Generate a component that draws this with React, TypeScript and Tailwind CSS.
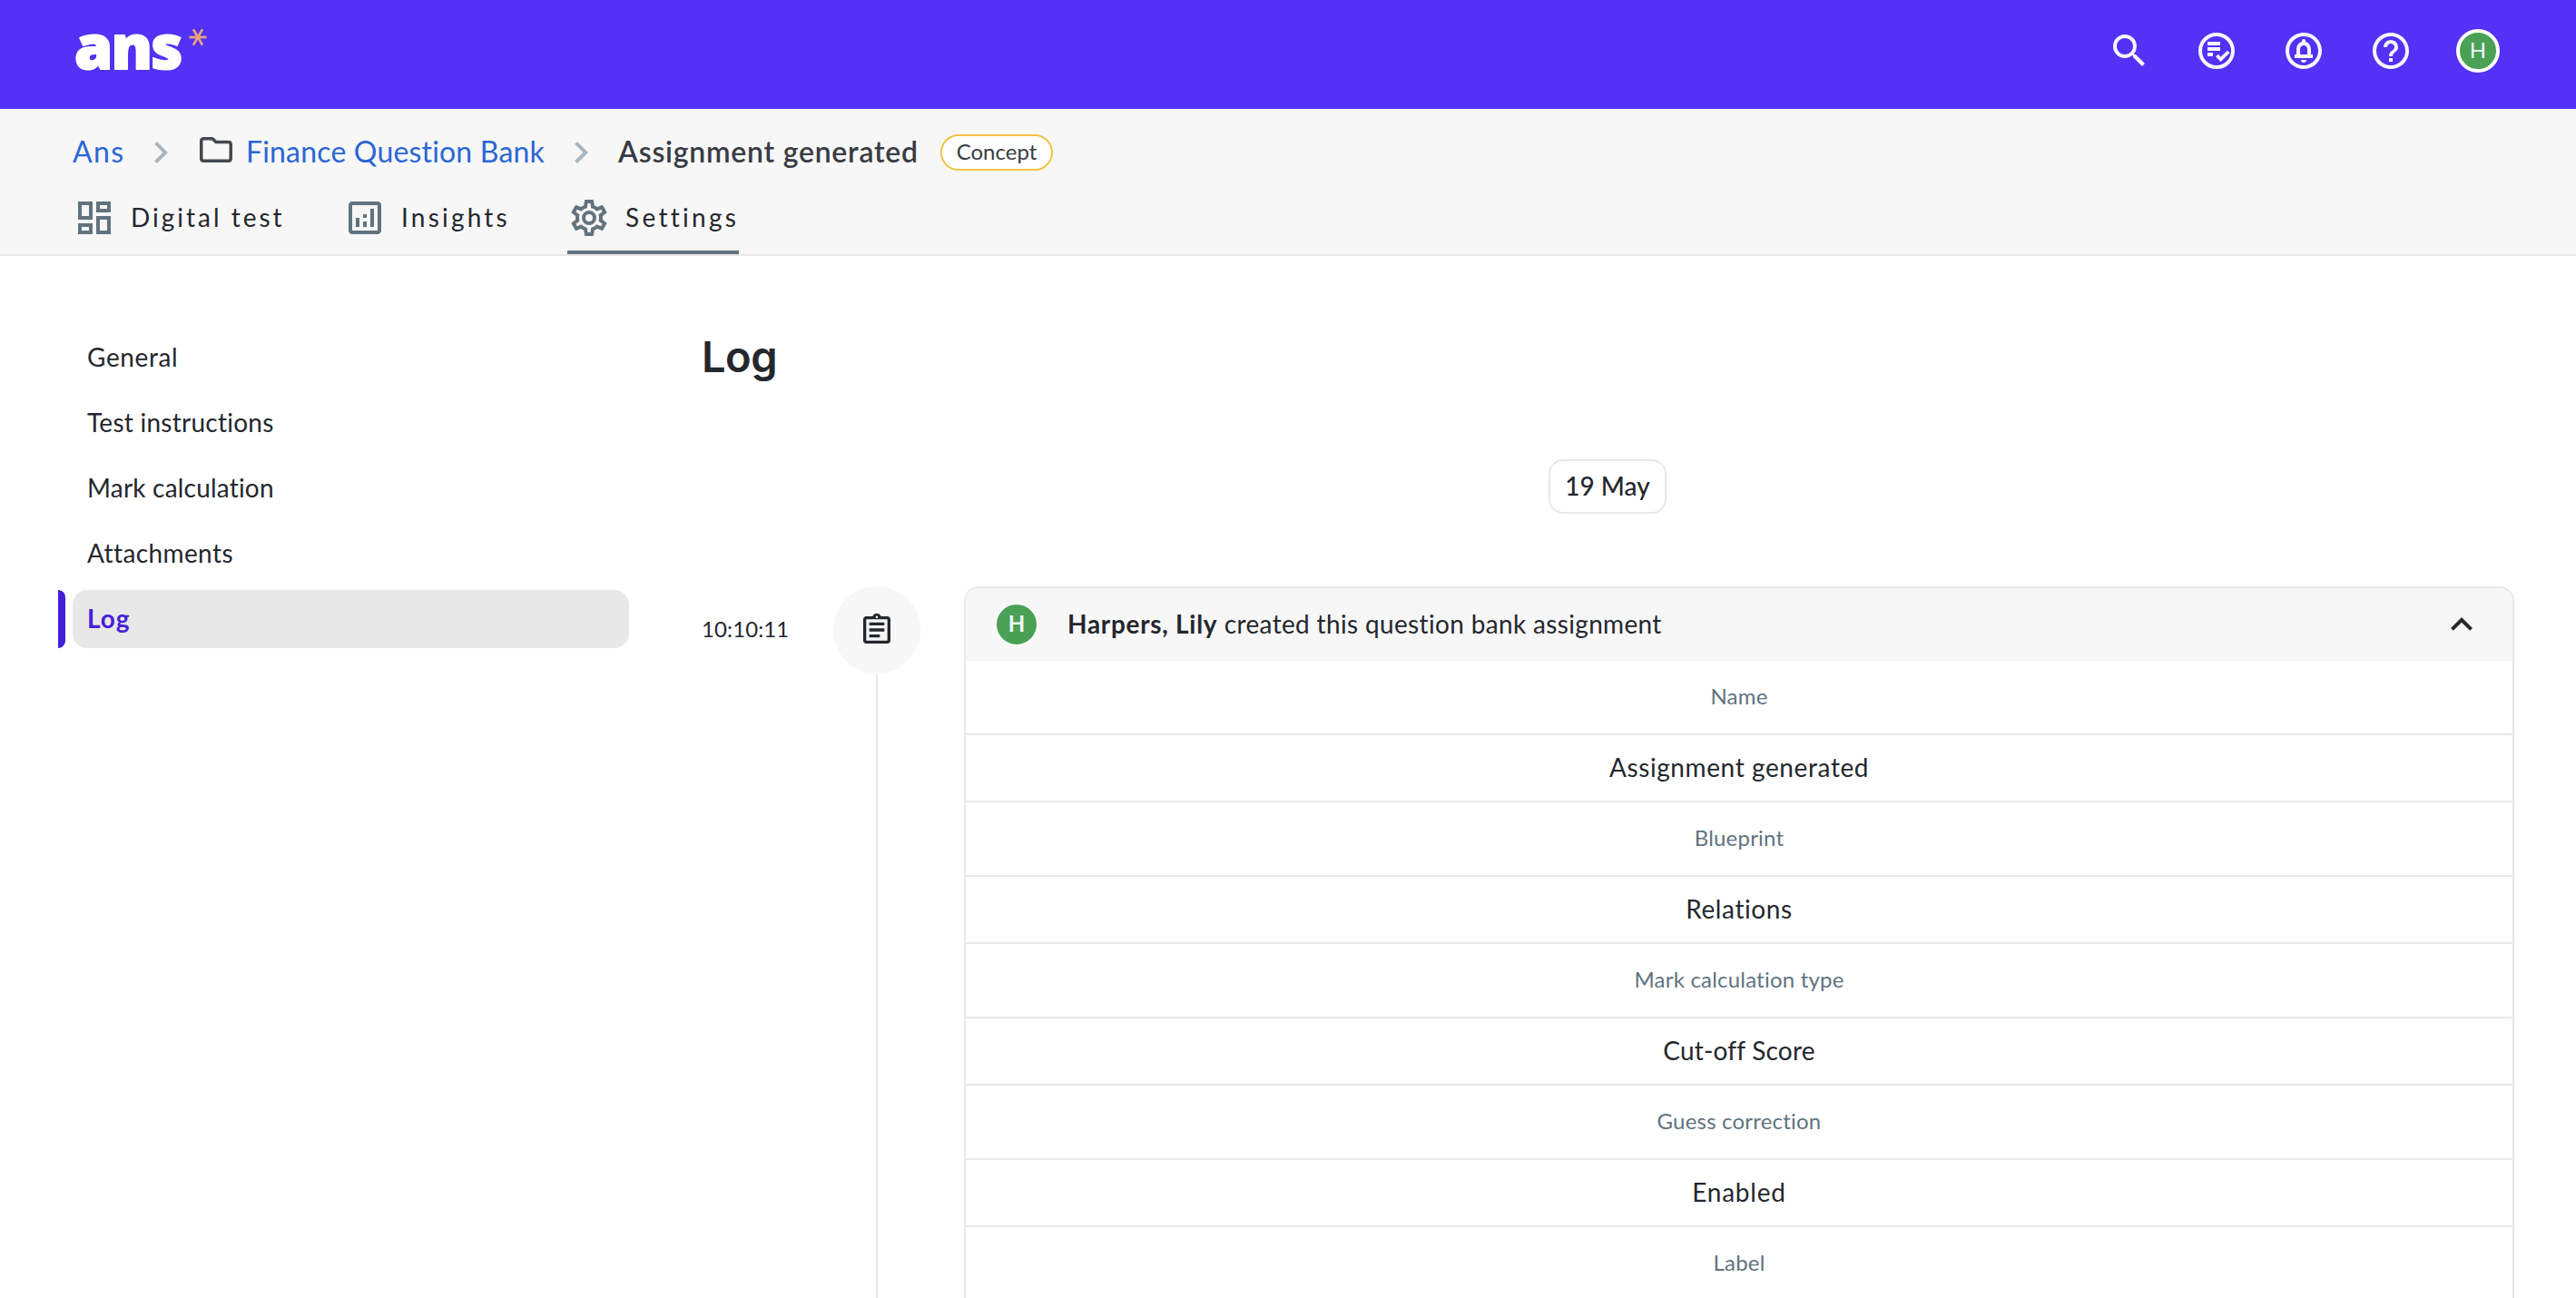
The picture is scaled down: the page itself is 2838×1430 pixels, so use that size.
import { ReactNode } from "react";
import {
  MdChevronRight,
  MdExpandLess,
  MdHelpOutline,
  MdOutlineAnalytics,
  MdOutlineAssignment,
  MdOutlineCircleNotifications,
  MdOutlineDashboard,
  MdSearch,
} from "react-icons/md";

const Logo = () => (
  <div className="flex h-[120px] items-start">
    <span className="mt-[3px] ml-0.5 w-[126px] font-['Open_Sans',sans-serif] text-[68px] leading-[94px] font-extrabold tracking-[-1.8px] text-white [-webkit-text-stroke:2px_white]">
      ans
    </span>
    <svg className="mt-[31px] h-5 w-5" viewBox="-10 -10 20 20">
      <g stroke="#e9a47e" strokeWidth="2.8">
        <path d="M-9.5 0H9.5" />
        <path d="M-5 -8.6L5 8.6" />
        <path d="M5 -8.6L-5 8.6" />
      </g>
    </svg>
  </div>
);

const GradingIcon = () => (
  <svg className="size-12" viewBox="0 0 24 24" fill="currentColor">
    <circle cx="12" cy="12" r="9" fill="none" stroke="currentColor" strokeWidth="2" />
    <path d="M7 7h7v2H7zM7 10h7v2H7zM7 13h3v2H7z" />
    <path
      d="M12.2 14.6l2.1 2.1 4.3-4.2"
      fill="none"
      stroke="currentColor"
      strokeWidth="1.9"
    />
  </svg>
);

const FolderIcon = () => (
  <svg className="h-7 w-9" viewBox="0 0 36 28">
    <path
      d="M4.5 1.75H14L18 5.5H31.5Q34.25 5.5 34.25 8.2V23.5Q34.25 26.25 31.5 26.25H4.5Q1.75 26.25 1.75 23.5V4.5Q1.75 1.75 4.5 1.75Z"
      fill="none"
      stroke="#414851"
      strokeWidth="3.5"
    />
  </svg>
);

const CogIcon = () => (
  <svg className="size-12" viewBox="0 0 24 24" fill="currentColor">
    <path d="M12,8A4,4 0 0,1 16,12A4,4 0 0,1 12,16A4,4 0 0,1 8,12A4,4 0 0,1 12,8M12,10A2,2 0 0,0 10,12A2,2 0 0,0 12,14A2,2 0 0,0 14,12A2,2 0 0,0 12,10M10,22C9.75,22 9.54,21.82 9.5,21.58L9.13,18.93C8.5,18.68 7.96,18.34 7.44,17.94L4.95,18.95C4.73,19.03 4.46,18.95 4.34,18.73L2.34,15.27C2.21,15.05 2.27,14.78 2.46,14.63L4.57,12.97L4.5,12L4.57,11L2.46,9.37C2.27,9.22 2.21,8.95 2.34,8.73L4.34,5.27C4.46,5.05 4.73,4.96 4.95,5.05L7.44,6.05C7.96,5.66 8.5,5.32 9.13,5.07L9.5,2.42C9.54,2.18 9.75,2 10,2H14C14.25,2 14.46,2.18 14.5,2.42L14.87,5.07C15.5,5.32 16.04,5.66 16.56,6.05L19.05,5.05C19.27,4.96 19.54,5.05 19.66,5.27L21.66,8.73C21.79,8.95 21.73,9.22 21.54,9.37L19.43,11L19.5,12L19.43,13L21.54,14.63C21.73,14.78 21.79,15.05 21.66,15.27L19.66,18.73C19.54,18.95 19.27,19.04 19.05,18.95L16.56,17.95C16.04,18.34 15.5,18.68 14.87,18.93L14.5,21.58C14.46,21.82 14.25,22 14,22H10M11.25,4L10.88,6.61C9.68,6.86 8.62,7.5 7.85,8.39L5.44,7.35L4.69,8.65L6.8,10.2C6.4,11.37 6.4,12.64 6.8,13.8L4.68,15.36L5.43,16.66L7.86,15.62C8.63,16.5 9.68,17.14 10.87,17.38L11.24,20H12.76L13.13,17.39C14.32,17.14 15.37,16.5 16.14,15.62L18.57,16.66L19.32,15.36L17.2,13.81C17.6,12.64 17.6,11.37 17.2,10.2L19.31,8.65L18.56,7.35L16.15,8.39C15.38,7.5 14.32,6.86 13.12,6.62L12.75,4H11.25Z" />
  </svg>
);

const Header = () => (
  <header className="flex h-[120px] justify-between bg-[#5331f5] pr-[84px] pl-[80px]">
    <Logo />
    <div className="flex h-[112px] items-center gap-12 text-[#f6f5fc]">
      <MdSearch className="size-12" />
      <GradingIcon />
      <MdOutlineCircleNotifications className="size-12" />
      <MdHelpOutline className="size-12" />
      <div className="flex size-12 items-center justify-center rounded-full border-4 border-white bg-[#4aa156] pb-0.5 text-[24px] leading-none">
        H
      </div>
    </div>
  </header>
);

const Breadcrumbs = () => (
  <div className="flex h-24 items-center text-[32px]">
    <a className="w-[73px] pb-[3px] tracking-[1.4px] text-[#2a66d5]">Ans</a>
    <MdChevronRight className="size-12 shrink-0 text-[#a9b5be]" />
    <a className="ml-[19px] flex w-[396px] items-center gap-[15px] text-[#2a66d5]">
      <span className="pb-1.5">
        <FolderIcon />
      </span>
      <span className="pb-[3px] tracking-[0.18px] whitespace-nowrap">
        Finance Question Bank
      </span>
    </a>
    <MdChevronRight className="size-12 shrink-0 text-[#a9b5be]" />
    <span className="ml-[17px] w-[355px] pb-[3px] font-semibold tracking-[0.74px] whitespace-nowrap text-[#373c43]">
      Assignment generated
    </span>
    <span className="flex h-10 w-[124px] items-center justify-center rounded-full border-2 border-[#f4c244] bg-white pb-0.5 text-[24px] text-[#373c43]">
      Concept
    </span>
  </div>
);

interface TabProps {
  icon: ReactNode;
  label: string;
  className: string;
  active?: boolean;
}
const Tab = ({ icon, label, className, active }: TabProps) => (
  <a
    className={`flex h-16 items-start gap-4 text-[28px] ${className} ${
      active ? "border-b-4 border-[#61737f]" : ""
    }`}
  >
    <span className="text-[#61737f]">{icon}</span>
    <span className="leading-[46px] whitespace-nowrap">{label}</span>
  </a>
);

const SubHeader = () => (
  <div className="h-[162px] border-b-2 border-[#e8e8e8] bg-[#f7f7f7] pl-[80px]">
    <Breadcrumbs />
    <nav className="flex">
      <Tab
        icon={<MdOutlineDashboard className="size-12" />}
        label="Digital test"
        className="w-[298px] tracking-[3px]"
      />
      <Tab
        icon={<MdOutlineAnalytics className="size-12" />}
        label="Insights"
        className="w-[247px] tracking-[3.2px]"
      />
      <Tab
        icon={<CogIcon />}
        label="Settings"
        className="w-[189px] tracking-[3.3px]"
        active
      />
    </nav>
  </div>
);

const menu = [
  { label: "General", className: "tracking-[0.6px]" },
  { label: "Test instructions", className: "tracking-[0.25px]" },
  { label: "Mark calculation", className: "tracking-[0.2px]" },
  { label: "Attachments", className: "tracking-[0.4px]" },
];

const Sidebar = () => (
  <aside className="flex w-[629px] flex-col gap-2 pt-20 text-[28px]">
    {menu.map((item) => (
      <a
        key={item.label}
        className={`ml-4 flex h-16 items-center px-4 pb-0.5 ${item.className}`}
      >
        {item.label}
      </a>
    ))}
    <div className="flex gap-2">
      <span className="h-16 w-2 rounded-r-lg bg-[#4520d9]" />
      <a className="flex h-16 flex-1 items-center rounded-2xl bg-[#e8e8e8] pb-0.5 pl-4 font-bold tracking-[1px] text-[#4520d9]">
        Log
      </a>
    </div>
  </aside>
);

const fields = [
  { name: "Name", value: "Assignment generated", className: "tracking-[0.6px]" },
  { name: "Blueprint", value: "Relations", className: "tracking-[0.6px]" },
  { name: "Mark calculation type", value: "Cut-off Score", className: "tracking-[0.2px]" },
  { name: "Guess correction", value: "Enabled", className: "tracking-[0.8px]" },
  { name: "Label", value: "", className: "" },
];

const LogCard = () => (
  <div className="h-[800px] w-[1708px] overflow-hidden rounded-t-2xl border-2 border-[#e8e8e8]">
    <div className="flex h-20 items-center bg-[#f7f7f7] px-8">
      <span className="flex size-12 items-center justify-center rounded-full border-2 border-white bg-[#4aa156] pb-0.5 text-[24px] leading-none font-bold text-[#f6f6f6]">
        H
      </span>
      <p className="ml-8 flex-1 pb-0.5 text-[28px] tracking-[0.34px]">
        <b className="tracking-[0.7px]">Harpers, Lily</b> created this question
        bank assignment
      </p>
      <MdExpandLess className="size-12" />
    </div>
    {fields.map((field) => (
      <div key={field.name}>
        <div className="flex h-[82px] items-center justify-center border-b-2 border-[#e8e8e8] pb-0.5 text-[24px] tracking-[0.2px] text-[#61737f]">
          {field.name}
        </div>
        <div
          className={`flex h-[74px] items-center justify-center border-b-2 border-[#e8e8e8] pb-0.5 text-[28px] ${field.className}`}
        >
          {field.value}
        </div>
      </div>
    ))}
  </div>
);

const App = () => {
  return (
    <div className="h-[1430px] w-[2838px] overflow-hidden bg-white font-['Lato',sans-serif] text-[#24272e]">
      <Header />
      <SubHeader />
      <div className="flex pl-16">
        <Sidebar />
        <main className="ml-20 w-[1997px] pt-20">
          <h1 className="h-16 font-['Inter',sans-serif] text-[47px] leading-[62px] font-semibold tracking-[-0.5px]">
            Log
          </h1>
          <div className="mt-20 flex justify-center pr-px">
            <span className="flex h-[60px] w-[130px] items-center justify-center rounded-2xl border-2 border-[#e8e8e8] pb-0.5 text-[28px] font-medium">
              19 May
            </span>
          </div>
          <div className="mt-20 flex">
            <time className="flex h-24 w-[145px] items-center pb-0.5 text-[24px] tracking-[0.1px]">
              10:10:11
            </time>
            <div className="flex w-24 flex-col items-center">
              <span className="flex size-24 items-center justify-center rounded-full bg-[#f7f7f7]">
                <MdOutlineAssignment className="size-10" />
              </span>
              <span className="w-0.5 flex-1 bg-[#e8e8e8]" />
            </div>
            <div className="ml-12">
              <LogCard />
            </div>
          </div>
        </main>
      </div>
    </div>
  );
};

export default App;
